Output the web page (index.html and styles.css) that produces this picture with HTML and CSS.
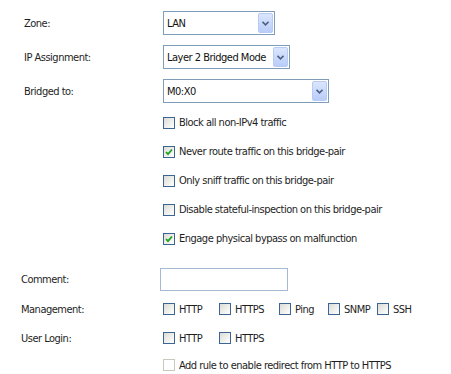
FILE: index.html
```html
<!DOCTYPE html>
<html lang="en">
<head>
    <meta charset="UTF-8">
    <title>Edit Interface</title>
    <link rel="stylesheet" href="styles.css">
</head>
<body>
    <div class="form">
        <div class="row top">
            <div class="label">Zone:</div>
            <div class="select sel-zone"><span class="value">LAN</span><span class="arrow"><svg width="7" height="5" viewBox="0 0 7 5"><path d="M0.5 0.8 L3.5 3.8 L6.5 0.8" fill="none" stroke="#4d6185" stroke-width="1.6"/></svg></span></div>
        </div>
        <div class="row top">
            <div class="label">IP Assignment:</div>
            <div class="select sel-mode"><span class="value">Layer 2 Bridged Mode</span><span class="arrow"><svg width="7" height="5" viewBox="0 0 7 5"><path d="M0.5 0.8 L3.5 3.8 L6.5 0.8" fill="none" stroke="#4d6185" stroke-width="1.6"/></svg></span></div>
        </div>
        <div class="row top">
            <div class="label">Bridged to:</div>
            <div class="select sel-bridge"><span class="value">M0:X0</span><span class="arrow"><svg width="7" height="5" viewBox="0 0 7 5"><path d="M0.5 0.8 L3.5 3.8 L6.5 0.8" fill="none" stroke="#4d6185" stroke-width="1.6"/></svg></span></div>
        </div>

        <div class="opts">
            <label class="check-row"><span class="box"></span>Block all non-IPv4 traffic</label>
            <label class="check-row"><span class="box checked"><svg width="8" height="8" viewBox="0 0 8 8"><path d="M1 4 L3 6.2 L7 1.5" fill="none" stroke="#21a121" stroke-width="1.8"/></svg></span>Never route traffic on this bridge-pair</label>
            <label class="check-row"><span class="box"></span>Only sniff traffic on this bridge-pair</label>
            <label class="check-row"><span class="box"></span>Disable stateful-inspection on this bridge-pair</label>
            <label class="check-row"><span class="box checked"><svg width="8" height="8" viewBox="0 0 8 8"><path d="M1 4 L3 6.2 L7 1.5" fill="none" stroke="#21a121" stroke-width="1.8"/></svg></span>Engage physical bypass on malfunction</label>
        </div>

        <div class="lower">
            <div class="row r-comment">
                <div class="label">Comment:</div>
                <input class="text-input" type="text">
            </div>
            <div class="row r-mgmt">
                <div class="label">Management:</div>
                <div class="checks">
                    <label class="item w-http"><span class="box"></span>HTTP</label>
                    <label class="item w-https"><span class="box"></span>HTTPS</label>
                    <label class="item w-ping"><span class="box"></span>Ping</label>
                    <label class="item w-snmp"><span class="box"></span>SNMP</label>
                    <label class="item"><span class="box"></span>SSH</label>
                </div>
            </div>
            <div class="row r-login">
                <div class="label">User Login:</div>
                <div class="checks">
                    <label class="item w-http"><span class="box"></span>HTTP</label>
                    <label class="item"><span class="box"></span>HTTPS</label>
                </div>
            </div>
            <div class="row r-redirect">
                <div class="label"></div>
                <label class="item"><span class="box disabled"></span>Add rule to enable redirect from HTTP to HTTPS</label>
            </div>
        </div>
    </div>
</body>
</html>
```

FILE: styles.css
```css
body {
    margin: 0;
    background: #fff;
    color: #1e1e1e;
    font-family: "DejaVu Sans Condensed", "Liberation Sans", sans-serif;
    font-size: 11px;
    letter-spacing: -0.5px;
}
.form {
    padding-top: 6px;
}
.row {
    display: flex;
    align-items: center;
}
.top {
    height: 34px;
    padding-left: 24px;
}
.top .label {
    width: 139px;
}
.select {
    display: flex;
    align-items: center;
    justify-content: space-between;
    height: 24px;
    box-sizing: border-box;
    border: 1px solid #7f9db9;
    background: #fff;
    padding: 1px 1px 1px 3px;
    font-size: 11px;
    color: #111;
    white-space: nowrap;
}
.sel-zone { width: 112px; }
.sel-mode { width: 127px; }
.sel-bridge { width: 166px; }
.arrow {
    display: flex;
    align-items: center;
    justify-content: center;
    width: 15px;
    height: 20px;
    box-sizing: border-box;
    border: 1px solid #b8cbf6;
    border-radius: 2px;
    background: linear-gradient(#dbe6fd, #b9cdf9);
}
.opts {
    padding-left: 163px;
}
.check-row {
    display: flex;
    align-items: center;
    height: 29px;
}
.box {
    display: inline-flex;
    align-items: center;
    justify-content: center;
    width: 12px;
    height: 12px;
    box-sizing: border-box;
    border: 1px solid #3a6595;
    background: linear-gradient(135deg, #dcdcd6, #fff);
    margin-right: 4px;
    flex-shrink: 0;
}
.box.disabled {
    border-color: #cac8bb;
    background: #fff;
}
.lower {
    margin-top: 11px;
    padding-left: 21px;
}
.lower .label {
    width: 139px;
}
.r-comment { height: 30px; }
.r-mgmt { height: 30px; }
.r-login { height: 28px; }
.r-redirect { height: 26px; }
.text-input {
    width: 128px;
    height: 23px;
    box-sizing: border-box;
    border: 1px solid #a5b9d1;
    margin: 0;
    padding: 2px;
}
.checks {
    display: flex;
    align-items: center;
    padding-left: 3px;
}
.r-redirect .item {
    margin-left: 3px;
}
.item {
    display: flex;
    align-items: center;
}
.w-http { width: 56px; }
.w-https { width: 60px; }
.w-ping { width: 49px; }
.w-snmp { width: 49px; }
```
